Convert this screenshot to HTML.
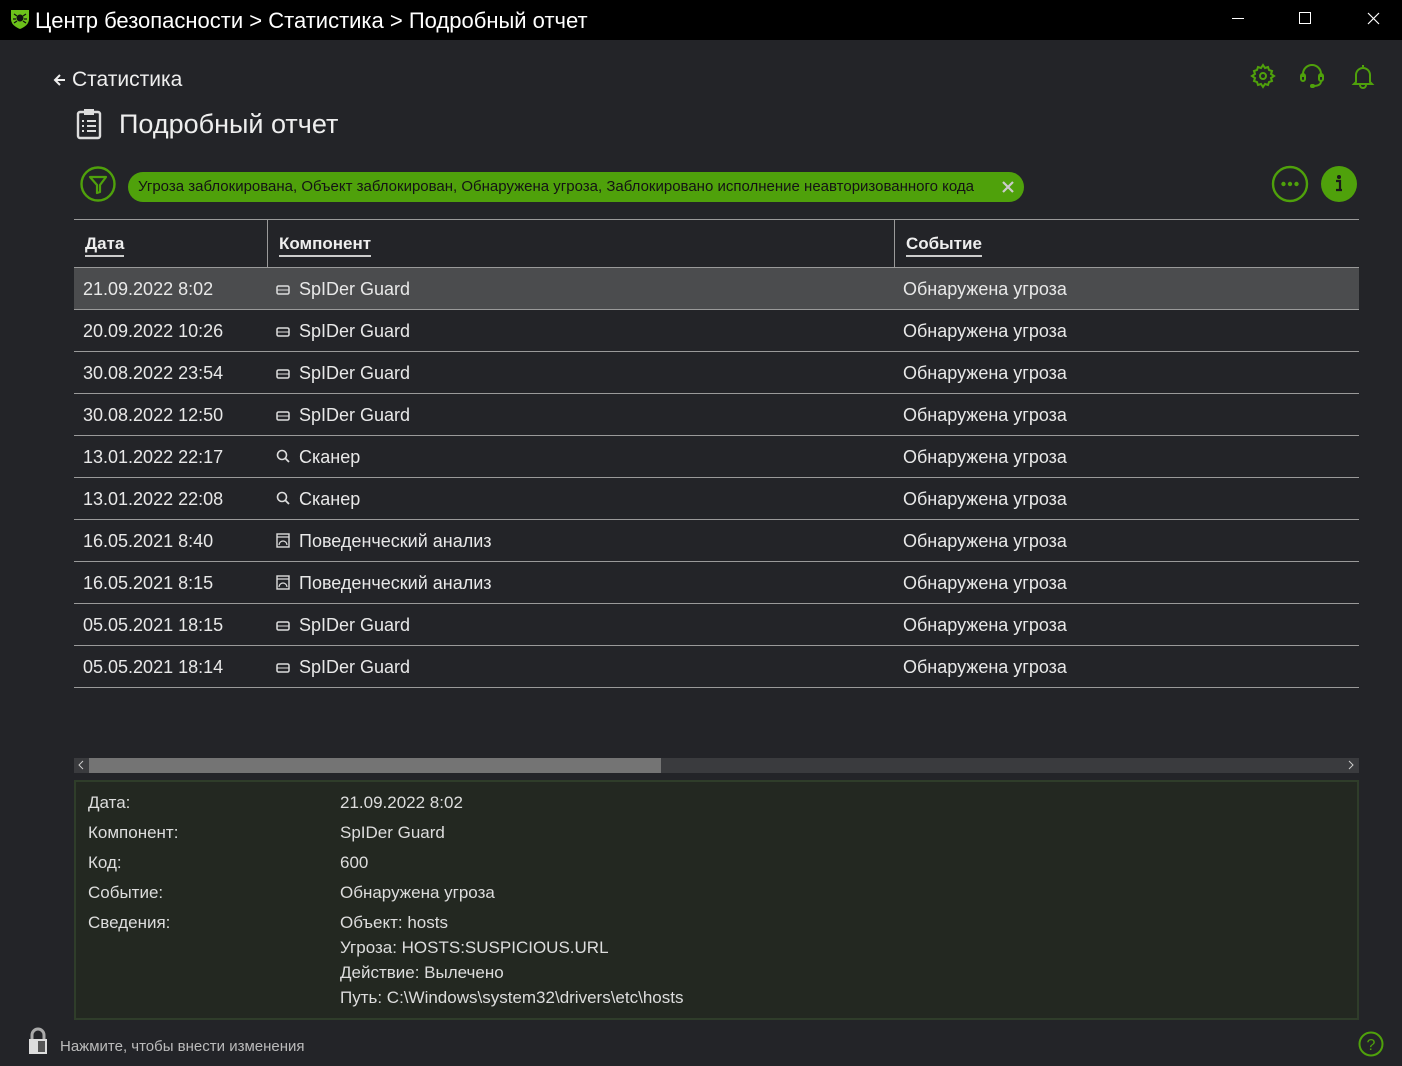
<!DOCTYPE html>
<html><head><meta charset="utf-8">
<style>
*{margin:0;padding:0;box-sizing:border-box}
body{width:1402px;height:1066px;background:#232428;font-family:"Liberation Sans","DejaVu Sans",sans-serif;color:#e6e6e6;position:relative;overflow:hidden}
.abs{position:absolute}
.title{left:0;top:0;width:1402px;height:40px;background:#000}
.title .t{left:35px;top:8px;font-size:22px;color:#fff;white-space:nowrap}
.row{position:absolute;left:74px;width:1285px;height:42px;border-bottom:1px solid #9a9a9a;font-size:18px;color:#e8e8e8}
.row span{position:absolute;top:11px;white-space:nowrap}
.c1{left:9px}.c2{left:225px}.c3{left:829px}
.ic{position:absolute;left:202px;top:15px}
.dl{position:absolute;left:88px;font-size:17px;color:#ddd}
.dv{position:absolute;left:340px;font-size:17px;color:#ddd;white-space:nowrap}
</style></head><body>
<div class="abs title">
 <svg class="abs" style="left:10px;top:8px" width="20" height="22" viewBox="0 0 20 22"><path d="M1 2h18v9c0 5-4 8-9 10C5 19 1 16 1 11z" fill="#6cc11a"/><circle cx="10" cy="10" r="3.5" fill="#111"/><path d="M4 6l3 2M16 6l-3 2M3 11h3M17 11h-3M4 15l3-2M16 15l-3-2" stroke="#111" stroke-width="1.3"/></svg>
 <div class="abs t">Центр безопасности &gt; Статистика &gt; Подробный отчет</div>
 <div class="abs" style="left:1232px;top:18px;width:12px;height:1px;background:#fff"></div>
 <div class="abs" style="left:1299px;top:12px;width:12px;height:12px;border:1px solid #fff"></div>
 <svg class="abs" style="left:1367px;top:12px" width="13" height="13"><path d="M1 1L12 12M12 1L1 12" stroke="#fff" stroke-width="1.2"/></svg>
</div>

<svg class="abs" style="left:53px;top:73px" width="14" height="14"><path d="M12 7H2M7 2L2 7l5 5" stroke="#eee" stroke-width="2" fill="none"/></svg>
<div class="abs" style="left:72px;top:68px;font-size:21px;color:#eee">Статистика</div>

<svg class="abs" style="left:76px;top:108px" width="26" height="32" viewBox="0 0 26 32"><rect x="2" y="4" width="22" height="26" rx="2" fill="none" stroke="#ddd" stroke-width="2.4"/><rect x="8" y="1" width="10" height="6" fill="#ddd"/><path d="M6 13h2M11 13h9M6 18h2M11 18h9M6 23h2M11 23h9" stroke="#ddd" stroke-width="2"/></svg>
<div class="abs" style="left:119px;top:109px;font-size:27px;color:#eee">Подробный отчет</div>

<svg class="abs" style="left:1249px;top:62px" width="28" height="28" viewBox="0 0 28 28"><path d="M14 3l2 3 3-1 1 3 3 1-1 3 3 2-3 2 1 3-3 1-1 3-3-1-2 3-2-3-3 1-1-3-3-1 1-3-3-2 3-2-1-3 3-1 1-3 3 1z" fill="none" stroke="#4fa10b" stroke-width="2"/><circle cx="14" cy="14" r="3" fill="none" stroke="#4fa10b" stroke-width="2"/></svg>
<svg class="abs" style="left:1298px;top:62px" width="28" height="28" viewBox="0 0 28 28"><path d="M5 15v-3a9 9 0 0118 0v3" fill="none" stroke="#4fa10b" stroke-width="2"/><rect x="3" y="12" width="4" height="7" rx="2" fill="none" stroke="#4fa10b" stroke-width="2"/><rect x="21" y="12" width="4" height="7" rx="2" fill="none" stroke="#4fa10b" stroke-width="2"/><path d="M23 19c0 4-4 5-8 5" fill="none" stroke="#4fa10b" stroke-width="2"/><rect x="12" y="22" width="5" height="4" rx="2" fill="#4fa10b"/></svg>
<svg class="abs" style="left:1350px;top:63px" width="26" height="26" viewBox="0 0 26 26"><path d="M13 2v2M6 19V12a7 7 0 0114 0v7l2 2H4z" fill="none" stroke="#4fa10b" stroke-width="2"/><path d="M10 22a3 3 0 006 0" fill="none" stroke="#4fa10b" stroke-width="2"/></svg>

<svg class="abs" style="left:80px;top:166px" width="36" height="36"><circle cx="18" cy="18" r="16.5" fill="none" stroke="#4fa10b" stroke-width="2.4"/><path d="M10 11h16l-6 8v7l-3 1v-8z" fill="none" stroke="#4fa10b" stroke-width="2.2" stroke-linejoin="round"/></svg>
<div class="abs" style="left:128px;top:172px;width:896px;height:30px;background:#4fa10b;border-radius:15px;font-size:15px;color:#141414;padding:6px 0 0 10px;white-space:nowrap">Угроза заблокирована, Объект заблокирован, Обнаружена угроза, Заблокировано исполнение неавторизованного кода</div>
<svg class="abs" style="left:1002px;top:181px" width="12" height="12"><path d="M1 1l10 10M11 1L1 11" stroke="#ccc" stroke-width="2.2"/></svg>
<svg class="abs" style="left:1271px;top:165px" width="38" height="38"><circle cx="19" cy="19" r="17" fill="none" stroke="#4fa10b" stroke-width="2.4"/><circle cx="12.5" cy="19" r="2.2" fill="#4fa10b"/><circle cx="19" cy="19" r="2.2" fill="#4fa10b"/><circle cx="25.5" cy="19" r="2.2" fill="#4fa10b"/></svg>
<svg class="abs" style="left:1320px;top:165px" width="38" height="38"><circle cx="19" cy="19" r="18" fill="#4fa10b"/><circle cx="19" cy="12" r="2" fill="#1a1a1a"/><path d="M16 16h4v9h2M16 25h6" stroke="#1a1a1a" stroke-width="2.2" fill="none"/></svg>

<div class="abs" style="left:74px;top:219px;width:1285px;height:1px;background:#9a9a9a"></div>
<div class="abs" style="left:74px;top:267px;width:1285px;height:1px;background:#9a9a9a"></div>
<div class="abs" style="left:267px;top:220px;width:1px;height:47px;background:#9a9a9a"></div>
<div class="abs" style="left:894px;top:220px;width:1px;height:47px;background:#9a9a9a"></div>
<div class="abs" style="left:85px;top:234px;font-size:17px;font-weight:bold;color:#eee;border-bottom:2px solid #ccc;padding-bottom:1px">Дата</div>
<div class="abs" style="left:279px;top:234px;font-size:17px;font-weight:bold;color:#eee;border-bottom:2px solid #ccc;padding-bottom:1px">Компонент</div>
<div class="abs" style="left:906px;top:234px;font-size:17px;font-weight:bold;color:#eee;border-bottom:2px solid #ccc;padding-bottom:1px">Событие</div>

<div class="row" style="top:268px;background:#4b4c4e"><svg class="ic" width="14" height="12"><rect x="1" y="3" width="12" height="8" rx="1.5" fill="none" stroke="#ddd" stroke-width="1.5"/><path d="M1 7h12" stroke="#ddd"/></svg><span class="c1">21.09.2022 8:02</span><span class="c2">SpIDer Guard</span><span class="c3">Обнаружена угроза</span></div>
<div class="row" style="top:310px"><svg class="ic" width="14" height="12"><rect x="1" y="3" width="12" height="8" rx="1.5" fill="none" stroke="#ddd" stroke-width="1.5"/><path d="M1 7h12" stroke="#ddd"/></svg><span class="c1">20.09.2022 10:26</span><span class="c2">SpIDer Guard</span><span class="c3">Обнаружена угроза</span></div>
<div class="row" style="top:352px"><svg class="ic" width="14" height="12"><rect x="1" y="3" width="12" height="8" rx="1.5" fill="none" stroke="#ddd" stroke-width="1.5"/><path d="M1 7h12" stroke="#ddd"/></svg><span class="c1">30.08.2022 23:54</span><span class="c2">SpIDer Guard</span><span class="c3">Обнаружена угроза</span></div>
<div class="row" style="top:394px"><svg class="ic" width="14" height="12"><rect x="1" y="3" width="12" height="8" rx="1.5" fill="none" stroke="#ddd" stroke-width="1.5"/><path d="M1 7h12" stroke="#ddd"/></svg><span class="c1">30.08.2022 12:50</span><span class="c2">SpIDer Guard</span><span class="c3">Обнаружена угроза</span></div>
<div class="row" style="top:436px"><svg class="ic" width="14" height="14" style="top:13px"><circle cx="6" cy="6" r="4.5" fill="none" stroke="#ddd" stroke-width="1.6"/><path d="M9 9l4 4" stroke="#ddd" stroke-width="1.8"/></svg><span class="c1">13.01.2022 22:17</span><span class="c2">Сканер</span><span class="c3">Обнаружена угроза</span></div>
<div class="row" style="top:478px"><svg class="ic" width="14" height="14" style="top:13px"><circle cx="6" cy="6" r="4.5" fill="none" stroke="#ddd" stroke-width="1.6"/><path d="M9 9l4 4" stroke="#ddd" stroke-width="1.8"/></svg><span class="c1">13.01.2022 22:08</span><span class="c2">Сканер</span><span class="c3">Обнаружена угроза</span></div>
<div class="row" style="top:520px"><svg class="ic" width="14" height="15" style="top:13px"><rect x="1" y="1" width="12" height="13" fill="none" stroke="#ddd" stroke-width="1.4"/><path d="M1 4h12M3 12a4 4 0 018 0" stroke="#ddd" stroke-width="1.2" fill="none"/></svg><span class="c1">16.05.2021 8:40</span><span class="c2">Поведенческий анализ</span><span class="c3">Обнаружена угроза</span></div>
<div class="row" style="top:562px"><svg class="ic" width="14" height="15" style="top:13px"><rect x="1" y="1" width="12" height="13" fill="none" stroke="#ddd" stroke-width="1.4"/><path d="M1 4h12M3 12a4 4 0 018 0" stroke="#ddd" stroke-width="1.2" fill="none"/></svg><span class="c1">16.05.2021 8:15</span><span class="c2">Поведенческий анализ</span><span class="c3">Обнаружена угроза</span></div>
<div class="row" style="top:604px"><svg class="ic" width="14" height="12"><rect x="1" y="3" width="12" height="8" rx="1.5" fill="none" stroke="#ddd" stroke-width="1.5"/><path d="M1 7h12" stroke="#ddd"/></svg><span class="c1">05.05.2021 18:15</span><span class="c2">SpIDer Guard</span><span class="c3">Обнаружена угроза</span></div>
<div class="row" style="top:646px"><svg class="ic" width="14" height="12"><rect x="1" y="3" width="12" height="8" rx="1.5" fill="none" stroke="#ddd" stroke-width="1.5"/><path d="M1 7h12" stroke="#ddd"/></svg><span class="c1">05.05.2021 18:14</span><span class="c2">SpIDer Guard</span><span class="c3">Обнаружена угроза</span></div>

<div class="abs" style="left:74px;top:758px;width:1285px;height:15px;background:#3a3b3e"></div>
<div class="abs" style="left:89px;top:758px;width:572px;height:15px;background:#747474"></div>
<svg class="abs" style="left:77px;top:760px" width="8" height="10"><path d="M6 1L2 5l4 4" stroke="#ccc" fill="none"/></svg>
<svg class="abs" style="left:1347px;top:760px" width="8" height="10"><path d="M2 1l4 4-4 4" stroke="#ccc" fill="none"/></svg>

<div class="abs" style="left:74px;top:780px;width:1285px;height:240px;background:#232821;border:2px solid #2f3d2a"></div>
<div class="dl" style="top:793px">Дата:</div><div class="dv" style="top:793px">21.09.2022 8:02</div>
<div class="dl" style="top:823px">Компонент:</div><div class="dv" style="top:823px">SpIDer Guard</div>
<div class="dl" style="top:853px">Код:</div><div class="dv" style="top:853px">600</div>
<div class="dl" style="top:883px">Событие:</div><div class="dv" style="top:883px">Обнаружена угроза</div>
<div class="dl" style="top:913px">Сведения:</div>
<div class="dv" style="top:910px;line-height:25px">Объект: hosts<br>Угроза: HOSTS:SUSPICIOUS.URL<br>Действие: Вылечено<br>Путь: C:\Windows\system32\drivers\etc\hosts</div>

<svg class="abs" style="left:27px;top:1027px" width="22" height="28"><path d="M5 12V8a6 6 0 0112 0v4" fill="none" stroke="#aaa" stroke-width="3"/><rect x="2" y="12" width="18" height="15" fill="#ddd"/><rect x="11" y="14" width="7" height="11" fill="#555"/></svg>
<div class="abs" style="left:60px;top:1038px;font-size:15px;color:#bbb">Нажмите, чтобы внести изменения</div>
<svg class="abs" style="left:1358px;top:1031px" width="28" height="28"><circle cx="13" cy="13" r="11.5" fill="none" stroke="#4fa10b" stroke-width="2"/><text x="13" y="19" font-size="16" text-anchor="middle" fill="#4fa10b" font-family="Liberation Sans">?</text></svg>
</body></html>
